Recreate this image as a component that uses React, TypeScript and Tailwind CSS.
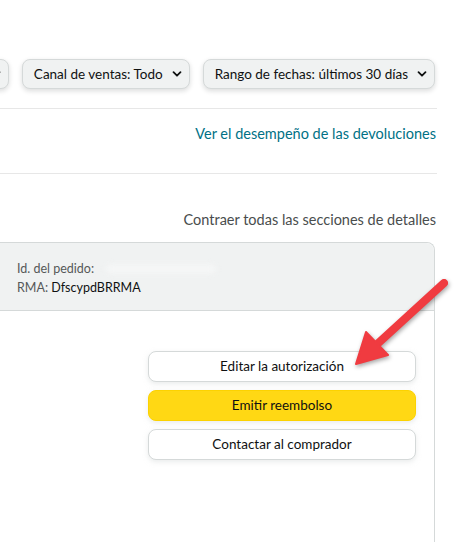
import React from "react";

function Chevron() {
  return (
    <svg width="10" height="10" viewBox="0 0 10 10" className="ml-[9px] shrink-0">
      <path d="M1.5 3.2 L5 6.7 L8.5 3.2" fill="none" stroke="#0f1111" strokeWidth="1.8" strokeLinecap="round" strokeLinejoin="round" />
    </svg>
  );
}

function Dropdown({ label }: { label: string }) {
  return (
    <div className="flex items-center h-[30px] shrink-0 rounded-[8px] border border-[#d5d9d9] bg-[#f0f2f2] shadow-[0_2px_5px_rgba(15,17,17,0.15)] pl-[11px] pr-[7px] text-[13.5px] text-[#0f1111] whitespace-nowrap">
      <span>{label}</span>
      <Chevron />
    </div>
  );
}

function Btn({ label, primary }: { label: string; primary?: boolean }) {
  return (
    <div
      className={
        primary
          ? "flex items-center justify-center h-[31px] rounded-[8px] border border-[#fcd200] bg-[#ffd814] shadow-[0_2px_5px_rgba(213,217,217,0.5)] text-[13.5px] text-[#0f1111]"
          : "flex items-center justify-center h-[31px] rounded-[8px] border border-[#d5d9d9] bg-white shadow-[0_2px_5px_rgba(213,217,217,0.5)] text-[13.5px] text-[#0f1111]"
      }
    >
      {label}
    </div>
  );
}

export default function App() {
  return (
    <div
      className="relative w-[471px] h-[542px] overflow-hidden bg-white"
      style={{ fontFamily: "Lato, 'Noto Sans', sans-serif" }}
    >
      <div className="w-[437px] pt-[59px]">
        <div className="flex justify-end gap-[13px] pr-[2px]">
          <div className="flex items-center h-[30px] w-[40px] shrink-0 rounded-[8px] border border-[#d5d9d9] bg-[#f0f2f2] shadow-[0_2px_5px_rgba(15,17,17,0.15)] pl-[12px]">
            <Chevron />
          </div>
          <Dropdown label="Canal de ventas: Todo" />
          <Dropdown label="Rango de fechas: últimos 30 días" />
        </div>
        <div className="mt-[19px] border-t border-[#e7e7e7]" />
        <div className="flex justify-end items-center h-[50px] pr-[1px] text-[14.5px] text-[#007185]">
          Ver el desempeño de las devoluciones
        </div>
        <div className="mt-[14px] border-t border-[#e7e7e7]" />
        <div className="flex justify-end items-center h-[30px] mt-[31px] pr-[1px] text-[14.5px] text-[#494d4d]">
          Contraer todas las secciones de detalles
        </div>
        <div className="mt-[7px] -ml-[12px] mr-[2px] h-[320px] rounded-t-[8px] border border-[#d5d9d9] border-b-0">
          <div className="h-[68px] rounded-t-[8px] bg-[#f0f2f2] border-b border-[#d5d9d9] pl-[28px] pt-[16px] text-[12.5px] leading-[19px]">
            <div className="flex items-center text-[#565959]">
              <span>Id. del pedido:</span>
              <span className="ml-[12px] h-[8px] w-[110px] rounded-full bg-[#f6f7f7] blur-[3px]" />
            </div>
            <div className="text-[#565959]">
              RMA: <span className="text-[#0f1111]">DfscypdBRRMA</span>
            </div>
          </div>
          <div className="flex justify-end pr-[18px] pt-[40px]">
            <div className="w-[268px] flex flex-col gap-[8px]">
              <Btn label="Editar la autorización" />
              <Btn label="Emitir reembolso" primary />
              <Btn label="Contactar al comprador" />
            </div>
          </div>
        </div>
      </div>
      <svg
        className="absolute left-0 top-0 pointer-events-none"
        width="471"
        height="542"
        viewBox="0 0 471 542"
        style={{ filter: "drop-shadow(1px 2px 2px rgba(0,0,0,0.35))" }}
      >
        <line x1="444" y1="283" x2="374" y2="347" stroke="#f03b40" strokeWidth="8" strokeLinecap="round" />
        <polygon points="356,364 366,332 388,355" fill="#f03b40" stroke="#f03b40" strokeWidth="2" strokeLinejoin="round" />
      </svg>
    </div>
  );
}
